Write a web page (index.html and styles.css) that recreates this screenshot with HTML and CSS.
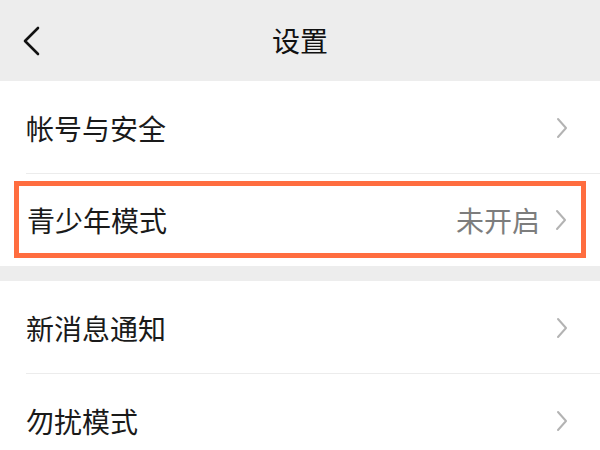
FILE: index.html
```html
<!DOCTYPE html>
<html lang="zh">
<head>
<meta charset="utf-8">
<link rel="stylesheet" href="styles.css">
</head>
<body>
<div class="page">
  <header class="nav">
    <svg class="back" width="20" height="30" viewBox="0 0 20 30"><path d="M16 2 L3 15 L16 28" fill="none" stroke="#111" stroke-width="2.6" stroke-linecap="round" stroke-linejoin="round"/></svg>
    <div class="title">设置</div>
  </header>
  <section class="group">
    <div class="row divider">
      <span class="label">帐号与安全</span>
      <span class="right"><svg class="chev" width="12" height="22" viewBox="0 0 12 22"><path d="M2 2 L10 11 L2 20" fill="none" stroke="#b3b3b3" stroke-width="2" stroke-linecap="round" stroke-linejoin="round"/></svg></span>
    </div>
    <div class="row-hl">
      <div class="hl-box">
        <span class="label">青少年模式</span>
        <span class="right"><span class="value">未开启</span><svg class="chev" width="12" height="22" viewBox="0 0 12 22"><path d="M2 2 L10 11 L2 20" fill="none" stroke="#b3b3b3" stroke-width="2" stroke-linecap="round" stroke-linejoin="round"/></svg></span>
      </div>
    </div>
  </section>
  <div class="gap"></div>
  <section class="group">
    <div class="row divider">
      <span class="label">新消息通知</span>
      <span class="right"><svg class="chev" width="12" height="22" viewBox="0 0 12 22"><path d="M2 2 L10 11 L2 20" fill="none" stroke="#b3b3b3" stroke-width="2" stroke-linecap="round" stroke-linejoin="round"/></svg></span>
    </div>
    <div class="row">
      <span class="label">勿扰模式</span>
      <span class="right"><svg class="chev" width="12" height="22" viewBox="0 0 12 22"><path d="M2 2 L10 11 L2 20" fill="none" stroke="#b3b3b3" stroke-width="2" stroke-linecap="round" stroke-linejoin="round"/></svg></span>
    </div>
  </section>
</div>
</body>
</html>
```
FILE: styles.css
```css
html, body {
  margin: 0;
  padding: 0;
  background: #ffffff;
}
body {
  font-family: "Noto Sans CJK SC", "Noto Sans", sans-serif;
  color: #1a1a1a;
  width: 600px;
  height: 450px;
  overflow: hidden;
}
.page {
  display: flex;
  flex-direction: column;
}
.nav {
  height: 81px;
  background: #ededed;
  display: grid;
  grid-template-columns: 1fr;
  align-items: center;
  position: relative;
}
.back {
  position: absolute;
  left: 22px;
  top: 26px;
}
.title {
  text-align: center;
  font-size: 28px;
  line-height: 1;
  color: #111;
  padding-bottom: 2px;
}
.group {
  background: #fff;
  display: flex;
  flex-direction: column;
}
.row {
  height: 93px;
  display: flex;
  align-items: center;
  justify-content: space-between;
  padding: 0 32px 0 26px;
  position: relative;
}
.row.divider::after {
  content: "";
  position: absolute;
  left: 26px;
  right: 0;
  bottom: 0;
  height: 1px;
  background: #ececec;
}
.label {
  font-size: 28px;
  line-height: 1;
  color: #1a1a1a;
}
.right {
  display: flex;
  align-items: center;
  gap: 15px;
}
.value {
  font-size: 28px;
  line-height: 1;
  color: #7d7d7d;
}
.chev {
  display: block;
}
.row-hl {
  height: 92px;
  padding: 7px 14px 8px 14px;
  box-sizing: border-box;
  display: flex;
}
.hl-box {
  flex: 1;
  border: 5px solid #ff6d3f;
  display: flex;
  align-items: center;
  justify-content: space-between;
  padding: 0 14px 0 8px;
}
.gap {
  height: 15px;
  background: #ededed;
}
```
